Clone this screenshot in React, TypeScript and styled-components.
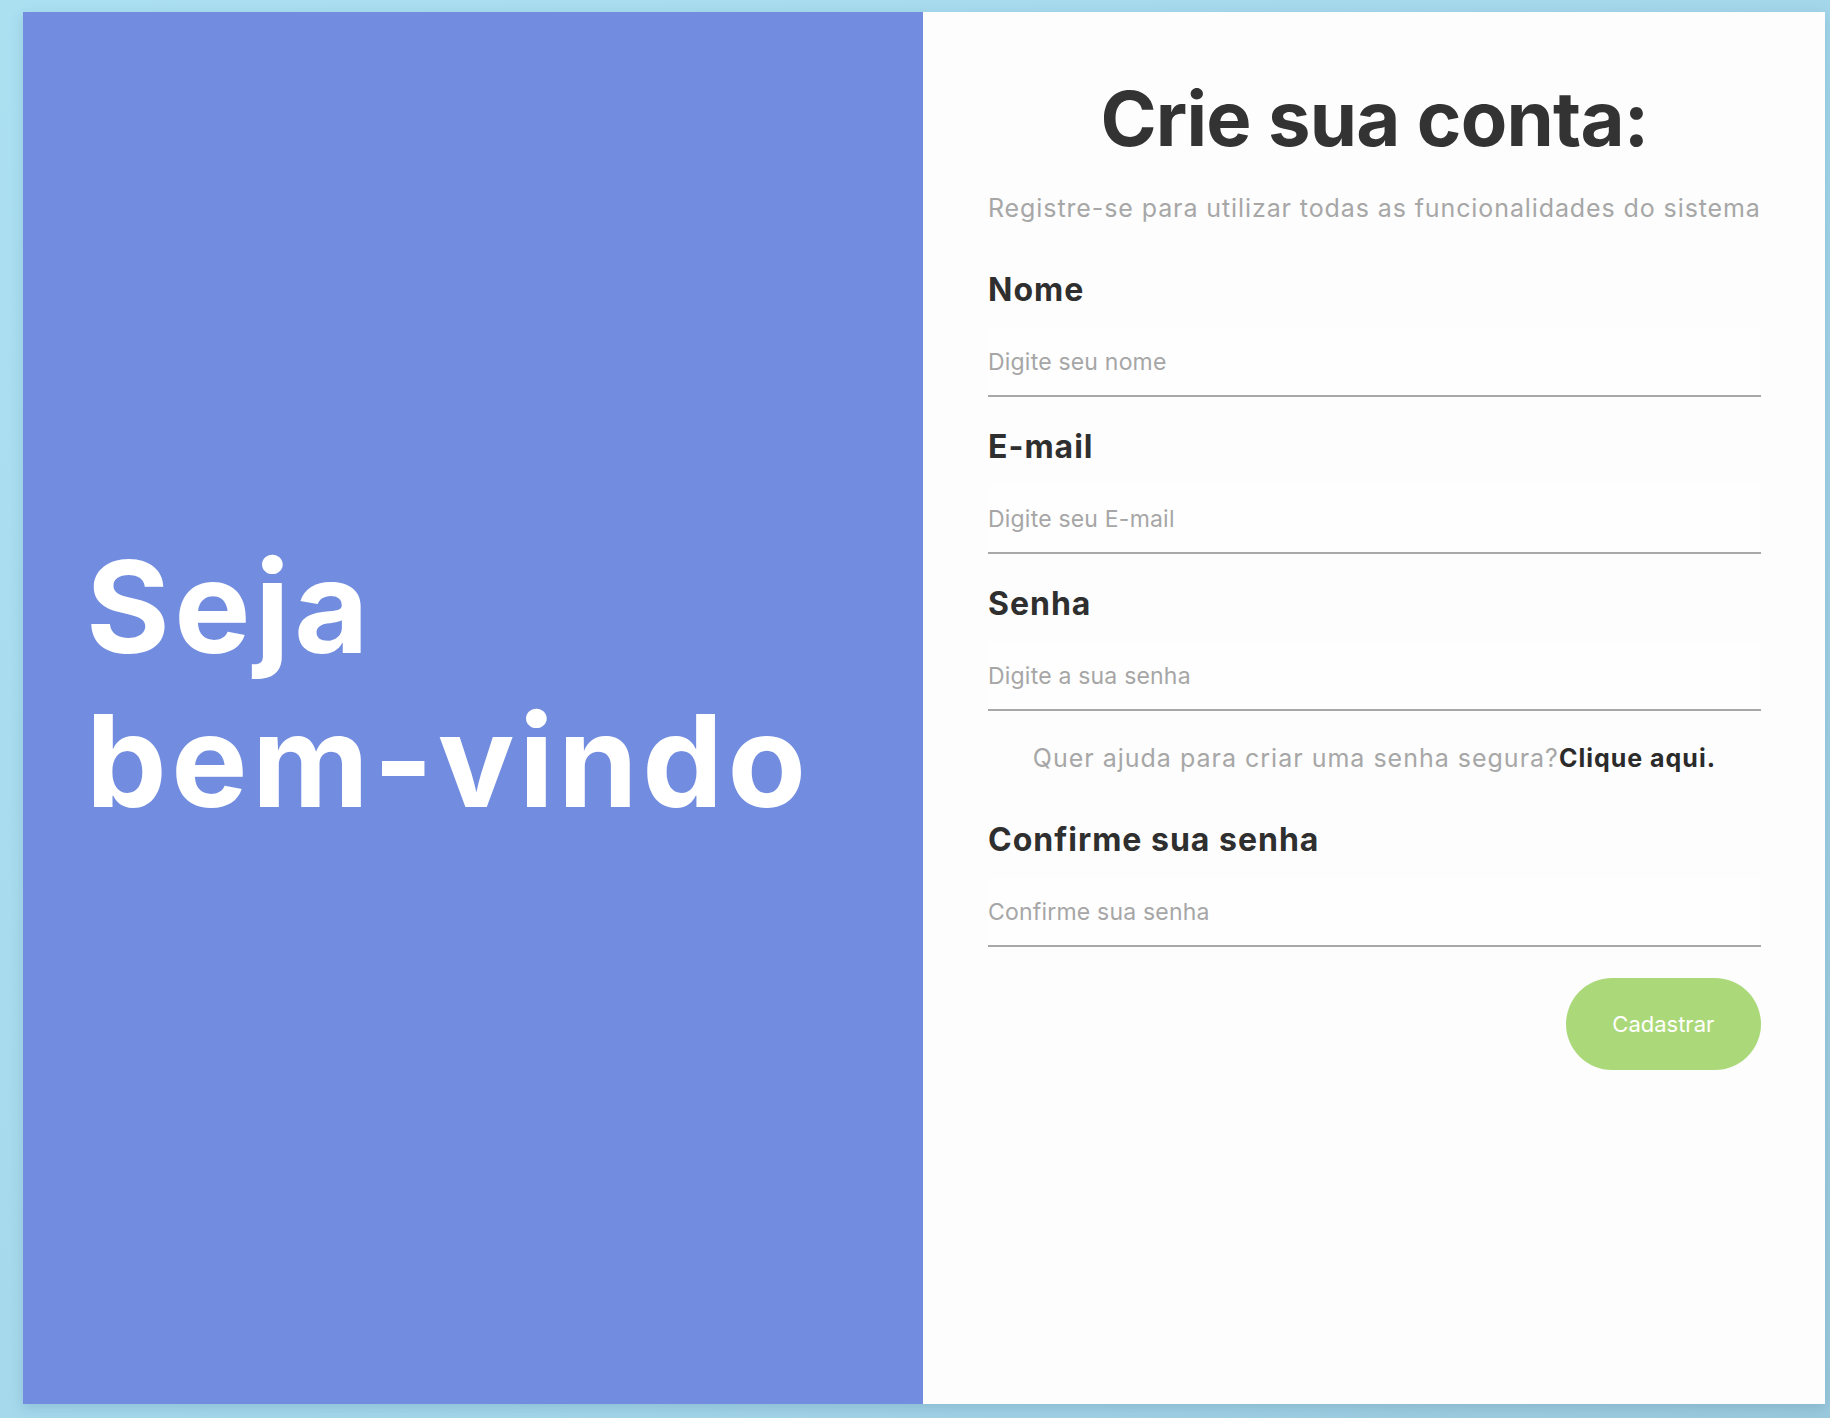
import styled, { createGlobalStyle } from 'styled-components';

const GlobalStyle = createGlobalStyle`
  html,
  body {
    margin: 0;
    padding: 0;
  }

  body {
    font-family: Inter, 'Noto Sans', sans-serif;
    background: linear-gradient(135deg, #abe0f1 0%, #a4d6ea 60%, #9bc9dd 100%);
    min-height: 100vh;
  }

  * {
    box-sizing: border-box;
  }
`;

const Page = styled.main`
  min-height: 100vh;
  padding: 12px 6px 14px 23px;
  display: flex;
`;

const Card = styled.section`
  flex: 1;
  display: grid;
  grid-template-columns: 900px 1fr;
  box-shadow: 0 4px 12px rgba(40, 90, 120, 0.18);
`;

const Welcome = styled.div`
  background-color: #728ddf;
  display: flex;
  flex-direction: column;
  justify-content: center;
  padding: 0 40px 0 63px;
`;

const WelcomeTitle = styled.h1`
  margin: 0 0 48px;
  color: #ffffff;
  font-size: 128px;
  line-height: 154px;
  font-weight: 700;
  letter-spacing: 4.5px;
`;

const FormPanel = styled.div`
  background-color: #fdfdfd;
  display: flex;
  flex-direction: column;
  padding: 68px 64px 0 65px;
`;

const Title = styled.h2`
  margin: 0;
  text-align: center;
  color: #333333;
  font-size: 76px;
  line-height: 76px;
  font-weight: 700;
  letter-spacing: -0.8px;
`;

const Subtitle = styled.p`
  margin: 37px 0 49px;
  color: #a7a7a7;
  font-size: 25px;
  line-height: 30px;
  letter-spacing: 0.9px;
  white-space: nowrap;
`;

const Field = styled.label`
  display: flex;
  flex-direction: column;
  gap: 20px;

  & + & {
    margin-top: 32px;
  }
`;

const FieldLabel = styled.span`
  color: #2f2f2f;
  font-size: 32px;
  line-height: 36px;
  font-weight: 700;
  letter-spacing: 1px;
`;

const Input = styled.input`
  width: 100%;
  height: 69px;
  padding: 0;
  border: none;
  border-bottom: 2px solid #a8a8a8;
  background-color: #fefefe;
  font-family: inherit;
  font-size: 23px;
  letter-spacing: 0.2px;
  color: #333333;
  outline: none;

  &::placeholder {
    color: #a6a6a6;
  }
`;

const HelpText = styled.p`
  margin: 32px 0 49px;
  text-align: center;
  color: #a7a7a7;
  font-size: 25px;
  line-height: 30px;
  letter-spacing: 1px;
`;

const HelpLink = styled.a`
  color: #2b2b2b;
  font-weight: 700;
  text-decoration: none;
  cursor: pointer;
`;

const SubmitButton = styled.button`
  align-self: flex-end;
  margin-top: 31px;
  width: 195px;
  height: 92px;
  border: none;
  border-radius: 46px;
  background-color: #abd97a;
  color: #ffffff;
  font-family: inherit;
  font-size: 22px;
  cursor: pointer;
`;

export default function App() {
  return (
    <>
      <GlobalStyle />
      <Page>
        <Card>
          <Welcome>
            <WelcomeTitle>
              Seja
              <br />
              bem-vindo
            </WelcomeTitle>
          </Welcome>

          <FormPanel>
            <Title>Crie sua conta:</Title>
            <Subtitle>Registre-se para utilizar todas as funcionalidades do sistema</Subtitle>

            <Field>
              <FieldLabel>Nome</FieldLabel>
              <Input type="text" placeholder="Digite seu nome" />
            </Field>
            <Field>
              <FieldLabel>E-mail</FieldLabel>
              <Input type="email" placeholder="Digite seu E-mail" />
            </Field>
            <Field>
              <FieldLabel>Senha</FieldLabel>
              <Input type="password" placeholder="Digite a sua senha" />
            </Field>

            <HelpText>
              Quer ajuda para criar uma senha segura?<HelpLink>Clique aqui.</HelpLink>
            </HelpText>

            <Field>
              <FieldLabel>Confirme sua senha</FieldLabel>
              <Input type="password" placeholder="Confirme sua senha" />
            </Field>

            <SubmitButton type="button">Cadastrar</SubmitButton>
          </FormPanel>
        </Card>
      </Page>
    </>
  );
}
